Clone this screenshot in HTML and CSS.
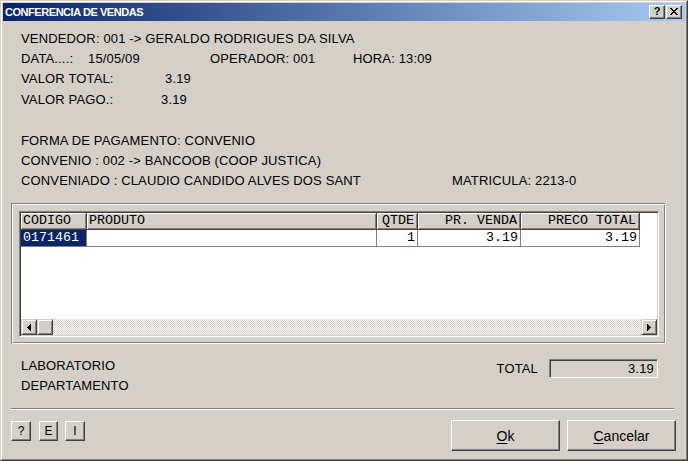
FILE: index.html
```html
<!DOCTYPE html>
<html>
<head>
<meta charset="utf-8">
<link rel="stylesheet" href="styles.css">
</head>
<body>
<div class="window">
  <div class="frame">
    <div class="titlebar">
      <span class="title">CONFERENCIA DE VENDAS</span>
      <div class="tbtns">
        <span class="tbtn tbtn-help">?</span>
        <span class="tbtn"><svg width="8" height="7" viewBox="0 0 8 7" shape-rendering="crispEdges"><path d="M0 0h2v1h1v1h2v-1h1v-1h2v1h-1v1h-1v1h-1v1h1v1h1v1h1v1h-2v-1h-1v-1h-2v1h-1v1h-2v-1h1v-1h1v-1h1v-1h-1v-1h-1v-1h-1z"/></svg></span>
      </div>
    </div>
    <div class="content">
      <div class="info">
        <div class="line">VENDEDOR: 001 -&gt; GERALDO RODRIGUES DA SILVA</div>
        <div class="line"><span class="w-data">DATA....:</span><span class="w-dval">15/05/09</span><span class="w-oper">OPERADOR: 001</span><span>HORA: 13:09</span></div>
        <div class="line"><span class="w-vtot">VALOR TOTAL:</span><span>3.19</span></div>
        <div class="line gap1"><span class="w-vpago">VALOR PAGO.:</span><span>3.19</span></div>
        <div class="line gap2">FORMA DE PAGAMENTO: CONVENIO</div>
        <div class="line">CONVENIO : 002 -&gt; BANCOOB (COOP JUSTICA)</div>
        <div class="line"><span class="w-conv">CONVENIADO : CLAUDIO CANDIDO ALVES DOS SANT</span><span>MATRICULA: 2213-0</span></div>
      </div>

      <div class="panel">
        <div class="grid">
          <div class="g-body">
            <div class="g-row g-head">
              <div class="gc c1">CODIGO</div>
              <div class="gc c2">PRODUTO</div>
              <div class="gc c3 r">QTDE</div>
              <div class="gc c4 r">PR. VENDA</div>
              <div class="gc c5 r">PRECO TOTAL</div>
            </div>
            <div class="g-row g-data">
              <div class="gc c1 sel">0171461</div>
              <div class="gc c2"></div>
              <div class="gc c3 r">1</div>
              <div class="gc c4 r">3.19</div>
              <div class="gc c5 r">3.19</div>
            </div>
          </div>
          <div class="hscroll">
            <div class="sb-btn"><svg width="4" height="7" viewBox="0 0 4 7" shape-rendering="crispEdges"><path d="M3 0h1v7h-1v-1h-1v-1h-1v-1h-1v-1h1v-1h1v-1h1z"/></svg></div>
            <div class="sb-thumb"></div>
            <div class="sb-track"></div>
            <div class="sb-btn"><svg width="4" height="7" viewBox="0 0 4 7" shape-rendering="crispEdges"><path d="M0 0h1v1h1v1h1v1h1v1h-1v1h-1v1h-1v1h-1z"/></svg></div>
          </div>
        </div>
      </div>

      <div class="lower">
        <div class="lower-left">
          <div class="line">LABORATORIO</div>
          <div class="line">DEPARTAMENTO</div>
        </div>
        <div class="total-group">
          <span class="total-label">TOTAL</span>
          <div class="total-box">3.19</div>
        </div>
      </div>

      <div class="separator"></div>

      <div class="buttons">
        <div class="small-btns">
          <div class="sbtn sbtn-q">?</div>
          <div class="sbtn sbtn-e">E</div>
          <div class="sbtn sbtn-i">I</div>
        </div>
        <div class="main-btns">
          <div class="btn"><span><u>O</u>k</span></div>
          <div class="btn"><span><u>C</u>ancelar</span></div>
        </div>
      </div>
    </div>
  </div>
</div>
</body>
</html>
```

FILE: styles.css
```css
* { box-sizing: border-box; }

body {
  margin: 0;
  background: #d4d0c8;
  font-family: "Liberation Sans", Arial, sans-serif;
  font-size: 13px;
  color: #000;
}

.window {
  width: 688px;
  height: 461px;
  border: 1px solid;
  border-color: #d4d0c8 #404040 #404040 #d4d0c8;
}

.frame {
  height: 100%;
  border: 1px solid;
  border-color: #fff #808080 #808080 #fff;
  padding: 1px;
  display: flex;
  flex-direction: column;
}

.titlebar {
  height: 18px;
  flex: none;
  background: linear-gradient(to right, #0a246a, #a6caf0);
  display: flex;
  align-items: center;
  padding: 0 3px 0 2px;
}

.title {
  flex: 1;
  color: #fff;
  font-weight: bold;
  font-size: 11px;
  letter-spacing: -0.45px;
}

.tbtns {
  display: flex;
  gap: 1px;
}

.tbtn {
  width: 16px;
  height: 14px;
  background: #d4d0c8;
  border: 1px solid;
  border-color: #fff #404040 #404040 #fff;
  box-shadow: inset -1px -1px #808080;
  display: flex;
  align-items: center;
  justify-content: center;
  font-weight: bold;
  font-size: 11px;
  line-height: 1;
  padding-bottom: 1px;
}

.tbtn svg { display: block; }

.content {
  flex: 1;
  display: flex;
  flex-direction: column;
}

.info {
  padding: 8px 0 0 18px;
}

.line {
  height: 20px;
  line-height: 20px;
  display: flex;
  white-space: nowrap;
  letter-spacing: 0.15px;
}

.gap1 { margin-top: 1px; }
.gap2 { margin-top: 21px; }

.w-data { width: 67px; }
.w-dval { width: 122px; }
.w-oper { width: 143px; }
.w-vtot { width: 144px; }
.w-vpago { width: 140px; }
.w-conv { width: 431px; }

.panel {
  margin: 12px 0 0 8px;
  width: 655px;
  height: 141px;
  border: 1px solid;
  border-color: #808080 #fff #fff #808080;
  box-shadow: inset 1px 1px #fff, inset -1px -1px #808080;
  padding: 7px 6px 6px 7px;
}

.grid {
  width: 640px;
  height: 126px;
  border: 1px solid;
  border-color: #808080 #fff #fff #808080;
  box-shadow: inset 1px 1px #404040, inset -1px -1px #d4d0c8;
  padding: 1px;
  display: flex;
  flex-direction: column;
}

.g-body {
  flex: 1;
  background: #fff;
}

.g-row {
  display: flex;
  height: 17px;
}

.gc {
  height: 17px;
  line-height: 16px;
  padding: 0 2px;
  font-family: "Liberation Mono", "Courier New", monospace;
  font-size: 13.33px;
  white-space: nowrap;
  overflow: hidden;
}

.g-head .gc {
  background: #d4d0c8;
  border-right: 1px solid #404040;
  border-bottom: 1px solid #404040;
  box-shadow: inset 1px 1px #fff, inset -1px -1px #808080;
  padding-left: 2px;
}

.g-data .gc {
  border-right: 1px solid #808080;
  border-bottom: 1px solid #808080;
}

.g-head .gc.r { padding-right: 3px; }

.c1 { width: 66px; }
.c2 { width: 290px; }
.c3 { width: 41px; }
.c4 { width: 103px; }
.c5 { width: 119px; }

.r { text-align: right; }

.gc.sel {
  background: #0a246a;
  color: #fff;
}

.hscroll {
  height: 16px;
  display: flex;
  flex: none;
}

.sb-btn, .sb-thumb {
  width: 16px;
  height: 16px;
  background: #d4d0c8;
  border: 1px solid;
  border-color: #d4d0c8 #404040 #404040 #d4d0c8;
  box-shadow: inset 1px 1px #fff, inset -1px -1px #808080;
  display: flex;
  align-items: center;
  justify-content: center;
  flex: none;
}

.sb-btn svg { display: block; }

.sb-track {
  flex: 1;
  background: repeating-conic-gradient(#fff 0 25%, #d4d0c8 0 50%);
  background-size: 2px 2px;
}

.lower {
  display: flex;
  margin-top: 12px;
  padding: 0 27px 0 18px;
}

.lower-left {
  flex: 1;
}

.total-group {
  display: flex;
  align-items: center;
  height: 22px;
  margin-top: 1px;
}

.total-label {
  letter-spacing: 0.15px;
  margin-right: 11px;
}

.total-box {
  width: 109px;
  height: 19px;
  border: 1px solid;
  border-color: #808080 #fff #fff #808080;
  box-shadow: inset 1px 1px #404040, inset -1px -1px #d4d0c8;
  text-align: right;
  padding-right: 3px;
  line-height: 17px;
  letter-spacing: 0.15px;
}

.separator {
  margin: 12px 0 0 8px;
  width: 663px;
  height: 2px;
  border-top: 1px solid #808080;
  border-bottom: 1px solid #fff;
}

.buttons {
  display: flex;
  justify-content: space-between;
  margin-top: 10px;
  padding: 0 9px 0 8px;
}

.small-btns {
  display: flex;
  margin-top: 1px;
}

.sbtn {
  width: 20px;
  height: 20px;
  background: #d4d0c8;
  border: 1px solid;
  border-color: #fff #404040 #404040 #fff;
  box-shadow: inset -1px -1px #808080;
  display: flex;
  align-items: center;
  justify-content: center;
  font-size: 12px;
}

.sbtn-e { margin-left: 8px; width: 19px; }
.sbtn-i { margin-left: 7px; }

.main-btns {
  display: flex;
  gap: 7px;
}

.btn {
  width: 109px;
  height: 31px;
  background: #d4d0c8;
  border: 1px solid;
  border-color: #fff #404040 #404040 #fff;
  box-shadow: inset -1px -1px #808080;
  display: flex;
  align-items: center;
  justify-content: center;
  font-size: 14px;
}

.btn u {
  text-decoration-thickness: 1px;
  text-underline-offset: 2px;
}
```
